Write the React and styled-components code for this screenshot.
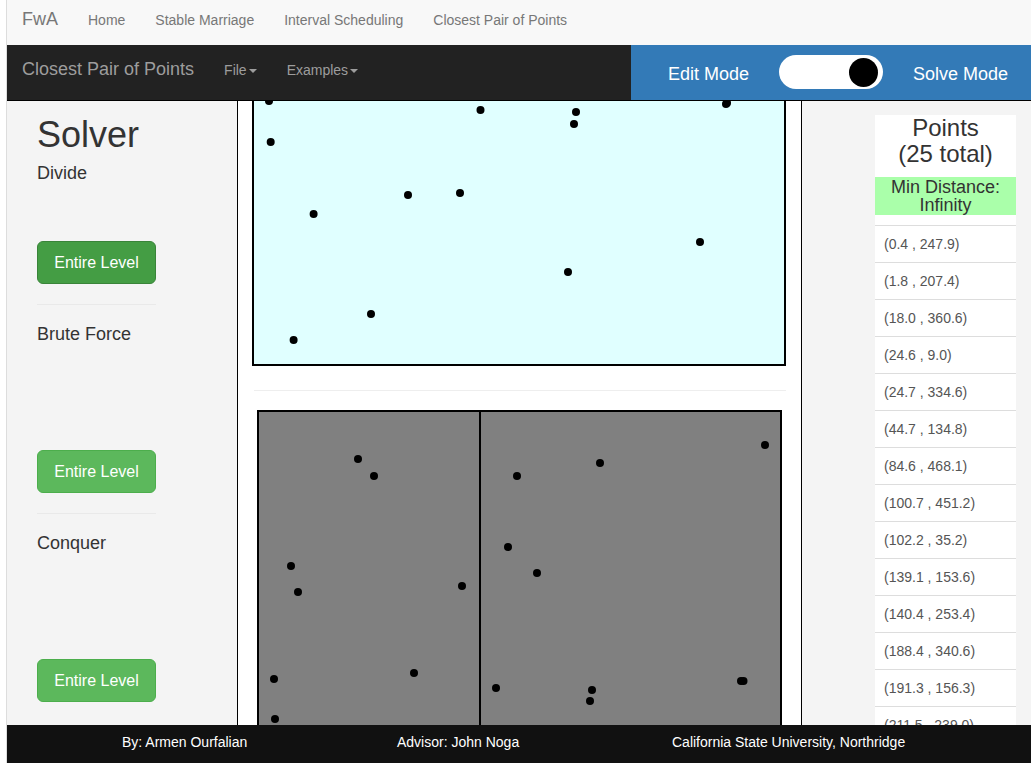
import React from 'react';
import styled, { createGlobalStyle } from 'styled-components';

const GlobalStyle = createGlobalStyle`
  * { box-sizing: border-box; }
  html, body { margin: 0; padding: 0; background: #fff; }
  body {
    font-family: "Liberation Sans", Arial, sans-serif;
    font-size: 14px;
    color: #333;
  }
`;

// points as they sit on the two canvases (canvas-local pixels)
const divideDots = [
  [15, 133], [226.5, 142], [322, 144], [320, 156], [472, 136], [473, 135], [16.7, 174],
  [154, 227], [206, 225], [59.6, 246], [446, 274], [314, 304], [117, 346], [39.6, 372],
];

const conquerDots = [
  [99, 47], [115, 64], [32, 154], [39, 180], [203, 174], [15, 267], [155, 261],
  [16, 307], [258, 64], [341, 51], [506, 33], [249, 135], [278, 161], [237, 276],
  [333, 278], [331, 289], [482, 269], [484.5, 269],
];

const pointList = [
  '(0.4 , 247.9)', '(1.8 , 207.4)', '(18.0 , 360.6)', '(24.6 , 9.0)',
  '(24.7 , 334.6)', '(44.7 , 134.8)', '(84.6 , 468.1)', '(100.7 , 451.2)',
  '(102.2 , 35.2)', '(139.1 , 153.6)', '(140.4 , 253.4)', '(188.4 , 340.6)',
  '(191.3 , 156.3)', '(211.5 , 239.0)',
];

const Shell = styled.div`
  margin-left: 6px;
  border-left: 1px solid #ddd;
  height: 763px;
  display: flex;
  flex-direction: column;
  overflow: hidden;
`;

const TopNav = styled.nav`
  height: 45px;
  flex: none;
  background: #f8f8f8;
  display: flex;
  align-items: baseline;
  padding-top: 9px;
`;

const Brand = styled.a`
  padding: 0 15px;
  font-size: 18px;
  line-height: 20px;
  color: ${p => (p.$dark ? '#9d9d9d' : '#777')};
`;

const NavLink = styled.a`
  padding: 0 15px;
  font-size: 14px;
  line-height: 20px;
  color: ${p => (p.$dark ? '#9d9d9d' : '#777')};
`;

const Caret = styled.span`
  display: inline-block;
  width: 0;
  height: 0;
  margin-left: 2px;
  vertical-align: middle;
  border-top: 4px solid;
  border-left: 4px solid transparent;
  border-right: 4px solid transparent;
`;

const SubNav = styled.nav`
  height: 56px;
  flex: none;
  background: #222;
  border-bottom: 1px solid #000;
  display: flex;
`;

const SubLinks = styled.div`
  display: flex;
  align-items: baseline;
  padding-top: 14px;
`;

const ModeBar = styled.div`
  margin-left: auto;
  width: 400px;
  background: #337ab7;
  display: flex;
  align-items: center;
  gap: 30px;
  padding: 2px 0 0 37px;
`;

const ModeLabel = styled.span`
  font-size: 18px;
  line-height: 20px;
  color: #fff;
`;

const Switch = styled.div`
  width: 104px;
  height: 34px;
  margin-top: -3px;
  border-radius: 17px;
  background: #fff;
  display: flex;
  align-items: center;
  justify-content: flex-end;
  padding: 0 5px;
`;

const Knob = styled.span`
  width: 29px;
  height: 29px;
  border-radius: 50%;
  background: #000;
`;

const Main = styled.main`
  flex: 1;
  min-height: 0;
  display: grid;
  grid-template-columns: 230px 565px 1fr;
  overflow: hidden;
`;

const SolverColumn = styled.section`
  background: #f4f4f4;
  padding: 14px 0 0 30px;
`;

const SolverInner = styled.div`
  width: 119px;
`;

const Heading = styled.h1`
  margin: 0;
  font-size: 36px;
  line-height: 40px;
  font-weight: 500;
  color: #333;
  white-space: nowrap;
`;

const StepTitle = styled.div`
  margin-top: ${p => p.$gap}px;
  font-size: 18px;
  line-height: 20px;
  white-space: nowrap;
`;

const LevelButton = styled.button`
  display: block;
  width: 119px;
  margin-top: ${p => p.$gap}px;
  padding: 10px 0;
  font-family: inherit;
  font-size: 16px;
  line-height: 21px;
  color: #fff;
  border-radius: 6px;
  border: 1px solid ${p => (p.$active ? '#398439' : '#4cae4c')};
  background: ${p => (p.$active ? '#449d44' : '#5cb85c')};
`;

const Rule = styled.hr`
  margin: 20px 0 0;
  border: 0;
  border-top: 1px solid #e9e9e9;
`;

const CanvasColumn = styled.section`
  background: #fff;
  border-left: 1px solid #000;
  border-right: 1px solid #000;
  overflow: hidden;
  display: flex;
  flex-direction: column;
  align-items: center;
`;

const Board = styled.div`
  flex: none;
  width: ${p => p.$w}px;
  height: 400px;
  border: 2px solid #000;
  background: ${p => p.$bg};
  margin-top: ${p => p.$top || 0}px;
  margin-left: ${p => p.$shift || 0}px;
`;

const Divider = styled.hr`
  flex: none;
  width: 532px;
  margin: 24px 0 19px;
  border: 0;
  border-top: 1px solid #eee;
`;

const PointsColumn = styled.aside`
  background: #f4f4f4;
  padding: 14px 0 0 73px;
`;

const PointsPanel = styled.div`
  width: 141px;
  background: #fff;
`;

const PanelTitle = styled.h3`
  margin: 0;
  font-size: 24px;
  line-height: 26.4px;
  font-weight: 500;
  text-align: center;
  color: #333;
`;

const MinBox = styled.div`
  margin-top: 9px;
  padding: 1px 0;
  background: #aaffaa;
  font-size: 18px;
  line-height: 18px;
  text-align: center;
  color: #333;
`;

const PointRows = styled.ul`
  list-style: none;
  margin: 10px 0 0;
  padding: 0;
`;

const PointRow = styled.li`
  border-top: 1px solid #ddd;
  padding: 8px 9px;
  font-size: 14px;
  line-height: 20px;
  color: #555;
  white-space: nowrap;
`;

const Footer = styled.footer`
  height: 38px;
  flex: none;
  background: #111;
  color: #fff;
  font-size: 14px;
  line-height: 35px;
  display: grid;
  grid-template-columns: repeat(3, 275px);
  padding-left: 115px;
  white-space: nowrap;
`;

const Dots = ({ dots, w, h, split }) => (
  <svg width={w} height={h} style={{ display: 'block' }}>
    {split != null && <line x1={split} y1={0} x2={split} y2={h} stroke="#000" strokeWidth={2} />}
    {dots.map(([x, y], i) => (
      <circle key={i} cx={x} cy={y} r={4} fill="#000" />
    ))}
  </svg>
);

const steps = [
  { title: 'Divide', titleGap: 8, buttonGap: 58, active: true },
  { title: 'Brute Force', titleGap: 19, buttonGap: 106 },
  { title: 'Conquer', titleGap: 19, buttonGap: 106, last: true },
];

export default function App() {
  return (
    <>
      <GlobalStyle />
      <Shell>
        <TopNav>
          <Brand>FwA</Brand>
          <NavLink>Home</NavLink>
          <NavLink>Stable Marriage</NavLink>
          <NavLink>Interval Scheduling</NavLink>
          <NavLink>Closest Pair of Points</NavLink>
        </TopNav>

        <SubNav>
          <SubLinks>
            <Brand $dark>Closest Pair of Points</Brand>
            <NavLink $dark>File<Caret /></NavLink>
            <NavLink $dark>Examples<Caret /></NavLink>
          </SubLinks>
          <ModeBar>
            <ModeLabel>Edit Mode</ModeLabel>
            <Switch><Knob /></Switch>
            <ModeLabel>Solve Mode</ModeLabel>
          </ModeBar>
        </SubNav>

        <Main>
          <SolverColumn>
            <SolverInner>
              <Heading>Solver</Heading>
              {steps.map(s => (
                <React.Fragment key={s.title}>
                  <StepTitle $gap={s.titleGap}>{s.title}</StepTitle>
                  <LevelButton $gap={s.buttonGap} $active={s.active}>Entire Level</LevelButton>
                  {!s.last && <Rule />}
                </React.Fragment>
              ))}
            </SolverInner>
          </SolverColumn>

          <CanvasColumn>
            <Board $w={534} $bg="#e0ffff" $top={-135} $shift={-1}>
              <Dots dots={divideDots} w={530} h={396} />
            </Board>
            <Divider />
            <Board $w={525} $bg="#808080" $shift={-1}>
              <Dots dots={conquerDots} w={521} h={396} split={221} />
            </Board>
          </CanvasColumn>

          <PointsColumn>
            <PointsPanel>
              <PanelTitle>Points<br />(25 total)</PanelTitle>
              <MinBox>Min Distance:<br />Infinity</MinBox>
              <PointRows>
                {pointList.map(p => <PointRow key={p}>{p}</PointRow>)}
              </PointRows>
            </PointsPanel>
          </PointsColumn>
        </Main>

        <Footer>
          <span>By: Armen Ourfalian</span>
          <span>Advisor: John Noga</span>
          <span>California State University, Northridge</span>
        </Footer>
      </Shell>
    </>
  );
}
